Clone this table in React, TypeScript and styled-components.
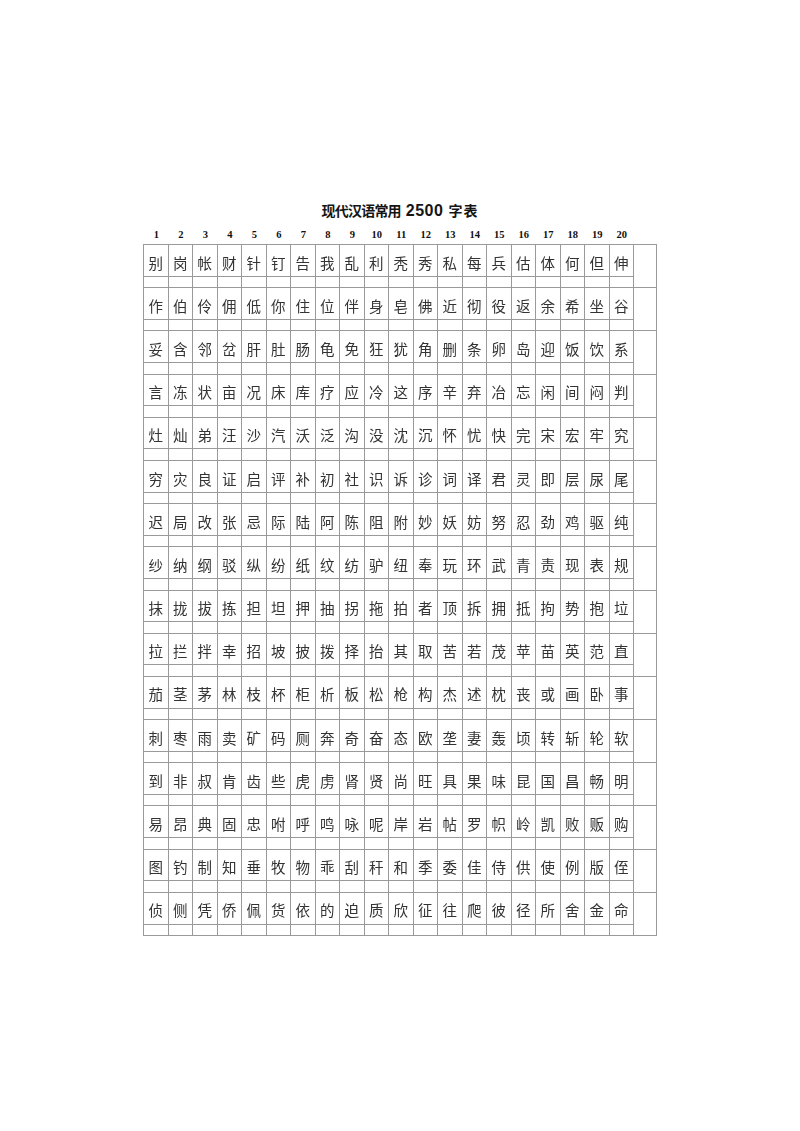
import React from "react";
import styled, { createGlobalStyle } from "styled-components";

const GlobalStyle = createGlobalStyle`
  html, body {
    margin: 0;
    padding: 0;
    background: #ffffff;
  }
  body {
    font-family: "Noto Sans CJK SC", "Noto Sans", sans-serif;
    -webkit-font-smoothing: antialiased;
  }
`;

const ROWS: string[] = [
  "别岗帐财针钉告我乱利秃秀私每兵估体何但伸",
  "作伯伶佣低你住位伴身皂佛近彻役返余希坐谷",
  "妥含邻岔肝肚肠龟免狂犹角删条卵岛迎饭饮系",
  "言冻状亩况床库疗应冷这序辛弃冶忘闲间闷判",
  "灶灿弟汪沙汽沃泛沟没沈沉怀忧快完宋宏牢究",
  "穷灾良证启评补初社识诉诊词译君灵即层尿尾",
  "迟局改张忌际陆阿陈阻附妙妖妨努忍劲鸡驱纯",
  "纱纳纲驳纵纷纸纹纺驴纽奉玩环武青责现表规",
  "抹拢拔拣担坦押抽拐拖拍者顶拆拥抵拘势抱垃",
  "拉拦拌幸招坡披拨择抬其取苦若茂苹苗英范直",
  "茄茎茅林枝杯柜析板松枪构杰述枕丧或画卧事",
  "刺枣雨卖矿码厕奔奇奋态欧垄妻轰顷转斩轮软",
  "到非叔肯齿些虎虏肾贤尚旺具果味昆国昌畅明",
  "易昂典固忠咐呼鸣咏呢岸岩帖罗帜岭凯败贩购",
  "图钓制知垂牧物乖刮秆和季委佳侍供使例版侄",
  "侦侧凭侨佩货依的迫质欣征往爬彼径所舍金命",
];

const COLS = "repeat(20, 24.5px) 23px";
const LINE = "#9a9a9a";

const Page = styled.div`
  width: 800px;
  min-height: 1131px;
  display: flex;
  flex-direction: column;
  align-items: center;
  padding-top: 200px;
  box-sizing: border-box;
`;

const Title = styled.h1`
  margin: 0;
  display: flex;
  align-items: baseline;
  gap: 5px;
  height: 20px;
  line-height: 20px;
  color: #151515;
  font-weight: 700;
  font-size: 14px;
`;

const TitleCjk = styled.span<{ $spacing: number }>`
  font-family: "Noto Sans CJK SC", sans-serif;
  font-size: 14px;
  letter-spacing: ${(p) => p.$spacing}px;
`;

const TitleDigits = styled.span`
  font-family: "Liberation Sans", "Arial", sans-serif;
  font-size: 16px;
  letter-spacing: 0.5px;
`;

const NumberRow = styled.div`
  display: grid;
  grid-template-columns: ${COLS};
  padding-left: 1px;
  margin-top: 8px;
  height: 14px;
  margin-bottom: 2px;
`;

const NumberCell = styled.div`
  text-align: center;
  font-family: "Liberation Serif", "Times New Roman", serif;
  font-weight: 700;
  font-size: 10.5px;
  line-height: 14px;
  color: #111;
`;

const Table = styled.div`
  border-top: 1px solid ${LINE};
  border-left: 1px solid ${LINE};
  will-change: transform;
`;

const Row = styled.div`
  display: grid;
  grid-template-columns: ${COLS};
  grid-template-rows: 31.7px 10.5px;
  border-bottom: 1px solid ${LINE};
`;

const CharCell = styled.div`
  box-sizing: border-box;
  border-right: 1px solid ${LINE};
  border-bottom: 1px solid ${LINE};
  display: flex;
  align-items: center;
  justify-content: center;
  padding-top: 5px;
  font-family: "Noto Sans CJK SC", sans-serif;
  font-weight: 400;
  font-size: 14.5px;
  line-height: 1;
  color: #333333;
`;

const SpaceCell = styled.div`
  border-right: 1px solid ${LINE};
`;

const EndCell = styled.div`
  grid-column: 21;
  grid-row: 1 / span 2;
  border-right: 1px solid ${LINE};
`;

export default function App() {
  return (
    <>
      <GlobalStyle />
      <Page>
        <Title>
          <TitleCjk $spacing={-0.8}>现代汉语常用</TitleCjk>
          <TitleDigits>2500</TitleDigits>
          <TitleCjk $spacing={1}>字表</TitleCjk>
        </Title>
        <NumberRow>
          {Array.from({ length: 20 }, (_, i) => (
            <NumberCell key={i}>{i + 1}</NumberCell>
          ))}
          <NumberCell />
        </NumberRow>
        <Table>
          {ROWS.map((row, r) => {
            const chars = Array.from(row);
            return (
              <Row key={r}>
                {chars.map((c, i) => (
                  <CharCell key={"c" + i} style={{ gridColumn: i + 1, gridRow: 1 }}>
                    {c}
                  </CharCell>
                ))}
                <EndCell />
                {chars.map((_, i) => (
                  <SpaceCell key={"s" + i} style={{ gridColumn: i + 1, gridRow: 2 }} />
                ))}
              </Row>
            );
          })}
        </Table>
      </Page>
    </>
  );
}
